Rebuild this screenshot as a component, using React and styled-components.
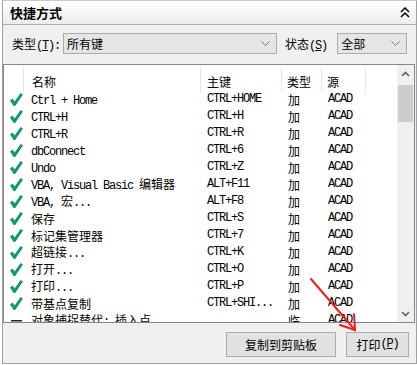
import React from 'react';
import styled, { createGlobalStyle } from 'styled-components';

const GlobalStyle = createGlobalStyle`
  html, body {
    margin: 0;
    padding: 0;
    background: #fff;
  }
  body {
    font-family: "Noto Sans CJK SC", "Liberation Sans", sans-serif;
    font-size: 12px;
    color: #000;
  }
`;

const Page = styled.div`
  position: relative;
  width: 417px;
  height: 365px;
  overflow: hidden;
`;

const Window = styled.div`
  margin-left: 2px;
  width: 415px;
  height: 364px;
  box-sizing: border-box;
  border: 1px solid #a0a0a0;
  border-top-color: #c8c8c8;
  background: #f0f0f0;
  display: flex;
  flex-direction: column;
`;

const TitleBar = styled.div`
  height: 23px;
  flex: none;
  border-bottom: 1px solid #a9a9a9;
  background: linear-gradient(#ffffff, #ececec);
  display: flex;
  align-items: center;
  justify-content: space-between;
  padding: 0 6px 0 7px;
`;

const Title = styled.span`
  font-family: "Noto Sans CJK SC", sans-serif;
  font-weight: bold;
  font-size: 13px;
  line-height: 23px;
`;

const FilterRow = styled.div`
  height: 39px;
  flex: none;
  box-sizing: border-box;
  padding: 8px 0 0 9px;
  display: flex;
  align-items: flex-start;
`;

const Label = styled.span`
  line-height: 21px;
  margin-right: ${p => p.$gap}px;
  white-space: nowrap;
`;

const Select = styled.div`
  width: ${p => p.$w}px;
  height: 21px;
  box-sizing: border-box;
  border: 1px solid #acacac;
  background: #e5e5e5;
  display: flex;
  align-items: center;
  justify-content: space-between;
  padding: 0 6px 0 3px;
  margin-right: ${p => p.$after || 0}px;
  line-height: 19px;
`;

const Latin = styled.span`
  font-family: "Liberation Mono", monospace;
  letter-spacing: -1.2px;
`;

const Han = styled.span`
  font-family: "Noto Sans CJK SC", sans-serif;
`;

const ListBox = styled.div`
  height: 259px;
  flex: none;
  box-sizing: border-box;
  margin-right: 1px;
  border: 1px solid #828790;
  background: #fff;
  display: flex;
`;

const TableArea = styled.div`
  flex: 1;
  overflow: hidden;
`;

const cols = '20px 177px 81px 40px 44px 30px';

const HeaderRow = styled.div`
  display: grid;
  grid-template-columns: ${cols};
  height: 26px;
`;

const HeaderCell = styled.div`
  box-sizing: border-box;
  padding: 4px 0 0 ${p => p.$pad || 0}px;
  line-height: 22px;
  border-right: ${p => (p.$last ? 'none' : '1px solid #e5e5e5')};
  margin: 2px 0 1px;
`;

const Row = styled.div`
  display: grid;
  grid-template-columns: ${cols};
  height: 17px;
  line-height: 17px;
  white-space: nowrap;
`;

const Cell = styled.div`
  padding-left: ${p => p.$pad || 0}px;
  overflow: hidden;
  display: flex;
  align-items: center;
`;

const IconCell = styled.div`
  display: flex;
  align-items: center;
  padding-left: 6px;
`;

const Scrollbar = styled.div`
  width: 17px;
  flex: none;
  background: #f0f0f0;
  display: flex;
  flex-direction: column;
`;

const ScrollButton = styled.div`
  height: 17px;
  display: flex;
  align-items: center;
  justify-content: center;
`;

const Track = styled.div`
  flex: 1;
  padding: 3px 1px 0;
`;

const Thumb = styled.div`
  height: 37px;
  background: #cdcdcd;
`;

const Footer = styled.div`
  flex: 1;
  display: flex;
  justify-content: flex-end;
  align-items: flex-start;
  gap: 10px;
  padding: 9px 7px 0 0;
`;

const Button = styled.div`
  width: ${p => p.$w}px;
  height: 25px;
  box-sizing: border-box;
  border: 1px solid #adadad;
  background: #e1e1e1;
  display: flex;
  align-items: center;
  justify-content: center;
  line-height: 23px;
`;

const Overlay = styled.svg`
  position: absolute;
  left: 0;
  top: 0;
  pointer-events: none;
`;

const HAN_RE = /([\u3000-\u9fff\uff00-\uffef]+)/;

const Mixed = ({ text }) =>
  text
    .split(HAN_RE)
    .filter(Boolean)
    .map((part, i) =>
      HAN_RE.test(part) ? <Han key={i}>{part}</Han> : <Latin key={i}>{part}</Latin>
    );

const Check = () => (
  <svg width="13" height="13" viewBox="0 0 13 13">
    <polygon points="0,7.5 2.6,5.6 4.6,8.4 10.6,0 13,1.4 5.2,13 3.6,13" fill="#14986a" />
  </svg>
);

const Dash = () => (
  <svg width="13" height="13" viewBox="0 0 13 13">
    <rect x="1" y="6" width="11" height="1.5" fill="#222" />
  </svg>
);

const Chevron = () => (
  <svg width="9" height="5" viewBox="0 0 9 5">
    <polyline points="0.5,0.5 4.5,4.5 8.5,0.5" fill="none" stroke="#7a7a7a" strokeWidth="1" />
  </svg>
);

const Arrow = ({ up }) => (
  <svg width="9" height="6" viewBox="0 0 9 6">
    <polyline
      points={up ? '1,5 4.5,1.5 8,5' : '1,1 4.5,4.5 8,1'}
      fill="none"
      stroke="#606060"
      strokeWidth="1.6"
    />
  </svg>
);

const Collapse = () => (
  <svg width="10" height="11" viewBox="0 0 10 11">
    <polyline points="1,5 5,1 9,5" fill="none" stroke="#000" strokeWidth="1.5" />
    <polyline points="1,10 5,6 9,10" fill="none" stroke="#000" strokeWidth="1.5" />
  </svg>
);

const rows = [
  ['Ctrl + Home', 'CTRL+HOME'],
  ['CTRL+H', 'CTRL+H'],
  ['CTRL+R', 'CTRL+R'],
  ['dbConnect', 'CTRL+6'],
  ['Undo', 'CTRL+Z'],
  ['VBA, Visual Basic 编辑器', 'ALT+F11'],
  ['VBA, 宏...', 'ALT+F8'],
  ['保存', 'CTRL+S'],
  ['标记集管理器', 'CTRL+7'],
  ['超链接...', 'CTRL+K'],
  ['打开...', 'CTRL+O'],
  ['打印...', 'CTRL+P'],
  ['带基点复制', 'CTRL+SHI...'],
  ['对象捕捉替代: 插入点', '', '临', true],
];

export default function App() {
  return (
    <Page>
      <GlobalStyle />
      <Window>
        <TitleBar>
          <Title>快捷方式</Title>
          <Collapse />
        </TitleBar>

        <FilterRow>
          <Label $gap={3}>
            <Han>类型</Han>
            <Latin>(<u>T</u>):</Latin>
          </Label>
          <Select $w={214} $after={8}>
            <Han>所有键</Han>
            <Chevron />
          </Select>
          <Label $gap={10}>
            <Han>状态</Han>
            <Latin>(<u>S</u>)</Latin>
          </Label>
          <Select $w={70}>
            <Han>全部</Han>
            <Chevron />
          </Select>
        </FilterRow>

        <ListBox>
          <TableArea>
            <HeaderRow>
              <HeaderCell />
              <HeaderCell $pad={8}>名称</HeaderCell>
              <HeaderCell $pad={6}>主键</HeaderCell>
              <HeaderCell $pad={5}>类型</HeaderCell>
              <HeaderCell $pad={5}>源</HeaderCell>
              <HeaderCell $last />
            </HeaderRow>
            {rows.map(([name, key, type, off], i) => (
              <Row key={i}>
                <IconCell>{off ? <Dash /> : <Check />}</IconCell>
                <Cell $pad={7}>
                  <span><Mixed text={name} /></span>
                </Cell>
                <Cell $pad={6}>
                  <Latin>{key}</Latin>
                </Cell>
                <Cell $pad={6}>
                  <Han>{type || '加'}</Han>
                </Cell>
                <Cell $pad={6}>
                  <Latin>ACAD</Latin>
                </Cell>
                <Cell />
              </Row>
            ))}
          </TableArea>
          <Scrollbar>
            <ScrollButton>
              <Arrow up />
            </ScrollButton>
            <Track>
              <Thumb />
            </Track>
            <ScrollButton>
              <Arrow />
            </ScrollButton>
          </Scrollbar>
        </ListBox>

        <Footer>
          <Button $w={110}>复制到剪贴板</Button>
          <Button $w={63}>
            <Han>打印</Han>
            <Latin>(<u>P</u>)</Latin>
          </Button>
        </Footer>
      </Window>

      <Overlay width="417" height="365" viewBox="0 0 417 365">
        <g stroke="#f01e1e" strokeWidth="2" strokeLinecap="round" fill="none">
          <line x1="311" y1="279" x2="355" y2="330" />
          <polyline points="340,325 355,330 354,314" />
        </g>
      </Overlay>
    </Page>
  );
}
